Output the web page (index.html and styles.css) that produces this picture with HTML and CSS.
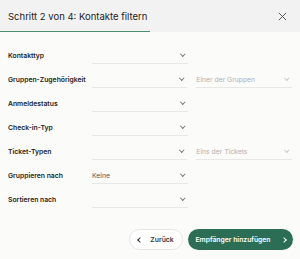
FILE: index.html
```html
<!DOCTYPE html>
<html lang="de">

<head>
    <meta charset="UTF-8">
    <meta name="viewport" content="width=device-width, initial-scale=1.0">
    <title>Kontakte filtern</title>
    <link rel="stylesheet" href="styles.css">
</head>

<body>
    <div class="dialog">
        <div class="dialog-header">
            <h1 class="dialog-title">Schritt 2 von 4: Kontakte filtern</h1>
            <button class="close-btn" aria-label="Schließen">
                <svg width="9" height="9" viewBox="0 0 10 10"><path d="M1 1L9 9M9 1L1 9" stroke="#555" stroke-width="1.1" fill="none"/></svg>
            </button>
            <div class="progress"><div class="progress-bar" style="width: 50%"></div></div>
        </div>

        <div class="dialog-body">
            <div class="filter-row">
                <label class="filter-label">Kontakttyp</label>
                <div class="select"><span class="select-value"></span><span class="chevron"></span></div>
            </div>
            <div class="filter-row">
                <label class="filter-label">Gruppen-Zugehörigkeit</label>
                <div class="select"><span class="select-value"></span><span class="chevron"></span></div>
                <div class="select select-sub"><span class="select-value placeholder">Einer der Gruppen</span><span class="chevron light"></span></div>
            </div>
            <div class="filter-row">
                <label class="filter-label">Anmeldestatus</label>
                <div class="select"><span class="select-value"></span><span class="chevron"></span></div>
            </div>
            <div class="filter-row">
                <label class="filter-label">Check-in-Typ</label>
                <div class="select"><span class="select-value"></span><span class="chevron"></span></div>
            </div>
            <div class="filter-row">
                <label class="filter-label">Ticket-Typen</label>
                <div class="select"><span class="select-value"></span><span class="chevron"></span></div>
                <div class="select select-sub"><span class="select-value placeholder">Eins der Tickets</span><span class="chevron light"></span></div>
            </div>
            <div class="filter-row">
                <label class="filter-label">Gruppieren nach</label>
                <div class="select"><span class="select-value">Keine</span><span class="chevron"></span></div>
            </div>
            <div class="filter-row">
                <label class="filter-label">Sortieren nach</label>
                <div class="select"><span class="select-value"></span><span class="chevron"></span></div>
            </div>
        </div>

        <div class="dialog-footer">
            <button class="btn btn-back"><span class="arrow arrow-left"></span>Zurück</button>
            <button class="btn btn-next">Empfänger hinzufügen<span class="arrow arrow-right"></span></button>
        </div>
    </div>
</body>

</html>
```

FILE: styles.css
```css
* {
    box-sizing: border-box;
}

body {
    margin: 0;
    font-family: Inter, "Noto Sans", sans-serif;
    background-color: #fbfbfa;
    color: #222;
}

.dialog {
    width: 300px;
    height: 259px;
    display: flex;
    flex-direction: column;
}

/* 头部 */
.dialog-header {
    position: relative;
    height: 32px;
    flex-shrink: 0;
    background-color: #f2f2f2;
    display: flex;
    align-items: center;
    justify-content: space-between;
    padding: 0 8px;
}

.dialog-title {
    margin: 0;
    font-size: 9.5px;
    font-weight: 400;
    color: #222;
}

.close-btn {
    border: none;
    background: none;
    padding: 0;
    margin-right: 5px;
    display: flex;
}

.progress {
    position: absolute;
    left: 0;
    right: 0;
    bottom: 0;
    height: 1px;
}

.progress-bar {
    height: 100%;
    background-color: #4e8b6f;
}

/* 筛选行 */
.dialog-body {
    padding: 15px 8px 0;
    display: flex;
    flex-direction: column;
    gap: 7px;
}

.filter-row {
    display: flex;
    align-items: center;
    height: 17px;
}

.filter-label {
    width: 84px;
    font-size: 6.8px;
    font-weight: 600;
    color: #222;
}

.select {
    width: 96px;
    height: 17px;
    border-bottom: 1px solid #e8e8e6;
    display: flex;
    align-items: center;
    justify-content: space-between;
    padding: 0 4px 0 0;
}

.select-sub {
    margin-left: 9px;
}

.select-value {
    font-size: 6.8px;
    color: #555;
}

.placeholder {
    color: #b0b0b0;
}

.chevron {
    width: 3.5px;
    height: 3.5px;
    border-right: 1px solid #777;
    border-bottom: 1px solid #777;
    transform: rotate(45deg);
    margin-top: -2px;
}

.chevron.light {
    border-color: #c8c8c8;
}

/* 底部按钮 */
.dialog-footer {
    margin-top: auto;
    padding: 0 7px 9px;
    display: flex;
    justify-content: flex-end;
    gap: 5px;
}

.btn {
    height: 21px;
    border-radius: 11px;
    font-family: Inter, "Noto Sans", sans-serif;
    font-size: 6.8px;
    font-weight: 600;
    white-space: nowrap;
    display: flex;
    align-items: center;
    justify-content: center;
    padding: 0;
}

.btn-back {
    width: 54px;
    background-color: #fff;
    border: 1px solid #e6e6e4;
    color: #333;
    gap: 8px;
}

.btn-next {
    width: 105px;
    background-color: #2b6e55;
    border: none;
    color: #fff;
    gap: 11px;
}

.arrow {
    width: 4px;
    height: 4px;
    border-right: 1px solid currentColor;
    border-bottom: 1px solid currentColor;
}

.arrow-left {
    transform: rotate(135deg);
}

.arrow-right {
    transform: rotate(-45deg);
}
```
